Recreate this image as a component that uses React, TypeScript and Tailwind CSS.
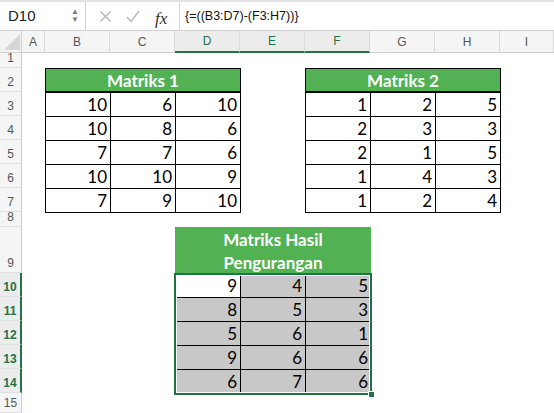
import React from "react";

const t1 = [
  [10, 6, 10],
  [10, 8, 6],
  [7, 7, 6],
  [10, 10, 9],
  [7, 9, 10],
];
const t2 = [
  [1, 2, 5],
  [2, 3, 3],
  [2, 1, 5],
  [1, 4, 3],
  [1, 2, 4],
];
const t3 = [
  [9, 4, 5],
  [8, 5, 3],
  [5, 6, 1],
  [9, 6, 6],
  [6, 7, 6],
];

const colLetters = ["A", "B", "C", "D", "E", "F", "G", "H", "I"];
const colStart = [
  "col-start-2",
  "col-start-3",
  "col-start-4",
  "col-start-5",
  "col-start-6",
  "col-start-7",
  "col-start-8",
  "col-start-9",
  "col-start-10",
];
const rowStart = [
  "row-start-1",
  "row-start-2",
  "row-start-3",
  "row-start-4",
  "row-start-5",
  "row-start-6",
  "row-start-7",
  "row-start-8",
  "row-start-9",
  "row-start-10",
  "row-start-11",
  "row-start-12",
  "row-start-13",
  "row-start-14",
  "row-start-15",
  "row-start-16",
];

const cellFont = { fontFamily: "Lato, 'Open Sans', sans-serif" };
const uiFont = { fontFamily: "'Liberation Sans', Arial, sans-serif" };

function BorderedTable({
  data,
  title,
  firstCol,
}: {
  data: number[][];
  title: string;
  firstCol: number;
}) {
  return (
    <>
      <div
        className={`${colStart[firstCol]} col-span-3 row-start-3 border border-black -mr-px bg-[#52b153] text-white font-bold text-[17px] flex items-center justify-center leading-[20px] pt-[1px]`}
        style={cellFont}
      >
        {title}
      </div>
      {data.map((row, r) =>
        row.map((v, c) => (
          <div
            key={`${r}-${c}`}
            className={`${colStart[firstCol + c]} ${rowStart[3 + r]} border-l border-t border-black ${
              c === 2 ? "border-r -mr-px" : ""
            } ${r === 4 ? "border-b -mb-px" : ""} flex items-end justify-end pr-[3px] pb-[1px] text-[17px] leading-[20px] text-black bg-white`}
            style={cellFont}
          >
            {v}
          </div>
        ))
      )}
    </>
  );
}

export default function App() {
  return (
    <div className="w-[554px] h-[413px] overflow-hidden bg-white relative" style={uiFont}>
      {/* Formula bar */}
      <div className="h-[31px] flex items-stretch bg-white border-t-2 border-[#e3e3e3] border-b border-b-[#cfcfcf]">
        <div className="w-[86px] flex items-center justify-between pl-[8px] pr-[6px] border-r border-[#d6d6d6]">
          <span className="text-[15px] text-[#222]">D10</span>
          <div className="flex flex-col items-center leading-none text-[#7a7a7a]">
            <span className="text-[8px]">▲</span>
            <span className="text-[8px]">▼</span>
          </div>
        </div>
        <div className="w-[94px] flex items-center border-r border-[#d6d6d6] relative">
          <svg className="absolute left-[13px] top-[8px]" width="13" height="13" viewBox="0 0 13 13">
            <path d="M1.5 1.5 L11.5 11.5 M11.5 1.5 L1.5 11.5" stroke="#b5b5b5" strokeWidth="1.3" fill="none" />
          </svg>
          <svg className="absolute left-[40px] top-[8px]" width="14" height="13" viewBox="0 0 14 13">
            <path d="M1 7 L5 11.5 L13 1" stroke="#b5b5b5" strokeWidth="1.3" fill="none" />
          </svg>
          <span
            className="absolute left-[69px] top-[4px] text-[17px] italic text-[#333]"
            style={{ fontFamily: "'Liberation Serif', 'Times New Roman', serif" }}
          >
            fx
          </span>
        </div>
        <div className="flex items-center pl-[5px] text-[12.5px] text-[#111]">{"{=((B3:D7)-(F3:H7))}"}</div>
      </div>

      {/* Sheet grid */}
      <div className="grid grid-cols-[22px_23px_repeat(7,65px)_1fr] grid-rows-[22px_15px_repeat(6,24px)_15px_46px_repeat(5,24px)_20px] bg-white">
        {/* Corner */}
        <div className="col-start-1 row-start-1 bg-[#f3f3f3] border-r border-b border-[#cfcfcf] relative">
          <svg className="absolute right-[1px] bottom-[2px]" width="16" height="16" viewBox="0 0 16 16">
            <path d="M16 0 L16 16 L0 16 Z" fill="#d6d6d6" />
          </svg>
        </div>
        {/* Column headers */}
        {colLetters.map((l, i) => {
          const sel = i >= 3 && i <= 5;
          return (
            <div
              key={l}
              className={`${colStart[i]} row-start-1 flex items-center justify-center text-[12px] border-r border-[#dadada] ${
                sel
                  ? "bg-[#ececec] text-[#217346] border-b-2 border-b-[#217346]"
                  : "bg-[#f5f5f5] text-[#555] border-b border-b-[#cfcfcf]"
              }`}
            >
              {l}
            </div>
          );
        })}
        {/* Row headers */}
        {Array.from({ length: 15 }, (_, k) => {
          const n = k + 1;
          const sel = n >= 10 && n <= 14;
          return (
            <div
              key={n}
              className={`col-start-1 ${rowStart[n]} flex items-end justify-center pb-[2px] text-[12px] leading-[14px] border-b border-[#e0e0e0] ${
                sel
                  ? "bg-[#ececec] text-[#217346] font-semibold border-r-2 border-r-[#217346]"
                  : "bg-[#f5f5f5] text-[#555] border-r border-r-[#cfcfcf]"
              }`}
            >
              {n}
            </div>
          );
        })}

        <BorderedTable data={t1} title="Matriks 1" firstCol={1} />
        <BorderedTable data={t2} title="Matriks 2" firstCol={5} />

        {/* Table 3 header */}
        <div
          className="col-start-5 col-span-3 row-start-10 bg-[#52b153] text-white font-bold text-[17px] leading-[23px] flex flex-col items-center justify-center pt-[1px] -mr-px"
          style={cellFont}
        >
          <span>Matriks Hasil</span>
          <span>Pengurangan</span>
        </div>
        {t3.map((row, r) =>
          row.map((v, c) => (
            <div
              key={`t3-${r}-${c}`}
              className={`${colStart[3 + c]} ${rowStart[10 + r]} ${r > 0 ? "border-t border-black" : ""} ${
                c > 0 ? "border-l border-black" : ""
              } ${c === 2 ? "-mr-px" : ""} ${r === 0 && c === 0 ? "bg-white" : "bg-[#c8c8c8]"} flex items-end justify-end pr-[3px] pb-[1px] text-[17px] leading-[20px] text-black`}
              style={cellFont}
            >
              {v}
            </div>
          ))
        )}
        {/* Selection overlay */}
        <div className="col-start-5 col-span-3 row-start-11 row-span-5 relative pointer-events-none -ml-px -mr-[2px] -mb-[2px]">
          <div className="absolute inset-0 border-2 border-[#217346] shadow-[inset_0_0_0_1px_#ffffff]" />
          <div className="absolute -right-[3px] -bottom-[3px] w-[7px] h-[7px] bg-[#217346] border border-white" />
        </div>
      </div>
    </div>
  );
}
